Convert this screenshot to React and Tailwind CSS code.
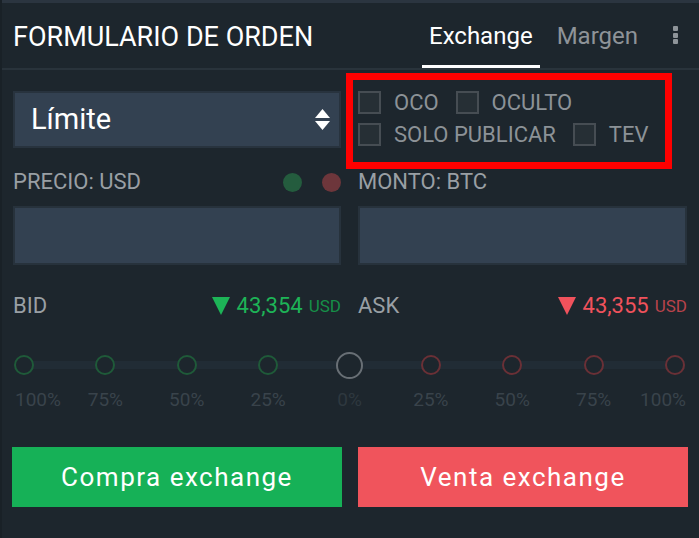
import React from "react";

const stops = [
  { label: "100%", tone: "green", align: "start" },
  { label: "75%", tone: "green" },
  { label: "50%", tone: "green" },
  { label: "25%", tone: "green" },
  { label: "0%", tone: "mid" },
  { label: "25%", tone: "red" },
  { label: "50%", tone: "red" },
  { label: "75%", tone: "red" },
  { label: "100%", tone: "red", align: "end" },
];

function Check({ label }) {
  return (
    <label className="flex items-center gap-[13px]">
      <span className="w-[23px] h-[23px] border-2 border-[#464d53] bg-[#262f35]" />
      <span className="text-[22px] leading-[23px] text-[#8c9297]">{label}</span>
    </label>
  );
}

function Stop({ stop }) {
  const ring =
    stop.tone === "green"
      ? "w-[20px] h-[20px] border-2 border-[#1f5a39]"
      : stop.tone === "red"
      ? "w-[20px] h-[20px] border-2 border-[#6a3036]"
      : "w-[27px] h-[27px] border-2 border-[#686f75]";
  const align =
    stop.align === "start" ? "items-start" : stop.align === "end" ? "items-end" : "items-center";
  return (
    <div className={"flex flex-col w-[20px] " + align}>
      <div className="h-[28px] w-full flex items-center justify-center">
        <span className={"shrink-0 rounded-full bg-[#1d262d] " + ring} />
      </div>
      <span
        className={
          "mt-[10px] whitespace-nowrap text-[19px] leading-[22px] " +
          (stop.tone === "mid" ? "text-[#2e383f]" : "text-[#39434b]") +
          (stop.align === "start" ? " ml-[1px]" : stop.align === "end" ? " mr-[-1px]" : "")
        }
      >
        {stop.label}
      </span>
    </div>
  );
}

export default function App() {
  return (
    <div className="w-[699px] h-[538px] bg-[#1d262d] border-l-2 border-[#192127] font-[Roboto,sans-serif] relative overflow-hidden">
      <div className="h-[3px] bg-[#2b3540]" />

      {/* header */}
      <header className="h-[67px] flex border-b-2 border-[#29333b] pl-[11px] pr-[21px]">
        <h1 className="self-center mt-[2px] text-[27px] leading-[30px] text-white">
          FORMULARIO DE ORDEN
        </h1>
        <nav className="ml-auto flex items-stretch">
          <button className="px-[7px] border-b-[3px] border-white text-[24px] text-white pt-[3px]">
            Exchange
          </button>
          <button className="ml-[10px] px-[7px] border-b-[3px] border-transparent text-[24px] text-[#8e9398] pt-[3px]">
            Margen
          </button>
          <div className="ml-[28px] flex flex-col gap-[1.5px] pt-[23px]">
            <span className="w-[5px] h-[5px] rounded-[1px] bg-[#8e9499]" />
            <span className="w-[5px] h-[5px] rounded-[1px] bg-[#8e9499]" />
            <span className="w-[5px] h-[5px] rounded-[1px] bg-[#8e9499]" />
          </div>
        </nav>
      </header>

      <div className="pl-[11px] pr-[10px]">
        <div className="grid grid-cols-[328px_329px] gap-x-[17px]">
          {/* type select */}
          <div className="mt-[21px] h-[57px] border-2 border-[#28333e] bg-[#334151] flex items-center pl-[16px] pr-[9px]">
            <span className="text-[29px] text-white">Límite</span>
            <svg className="ml-auto" width="15" height="22" viewBox="0 0 15 22">
              <path d="M7.5 0 L15 9 L0 9 Z" fill="#ffffff" />
              <path d="M0 12 L15 12 L7.5 21 Z" fill="#ffffff" />
            </svg>
          </div>

          {/* flags */}
          <div className="mt-[21px] flex flex-col gap-[9px]">
            <div className="flex gap-[17px]">
              <Check label="OCO" />
              <Check label="OCULTO" />
            </div>
            <div className="flex gap-[17px]">
              <Check label="SOLO PUBLICAR" />
              <Check label="TEV" />
            </div>
          </div>

          {/* labels */}
          <div className="mt-[23px] h-[22px] flex items-center">
            <span className="text-[22px] leading-[22px] text-[#999fa4]">PRECIO: USD</span>
            <span className="ml-auto w-[19px] h-[19px] rounded-full bg-[#245c3e]" />
            <span className="ml-[20px] w-[19px] h-[19px] rounded-full bg-[#6d363b]" />
          </div>
          <div className="mt-[23px] h-[22px] flex items-center">
            <span className="text-[22px] leading-[22px] text-[#999fa4]">MONTO: BTC</span>
          </div>

          {/* inputs */}
          <input className="mt-[13px] h-[59px] border-2 border-[#27323c] bg-[#334151] outline-none px-3 text-white" />
          <input className="mt-[13px] h-[59px] border-2 border-[#27323c] bg-[#334151] outline-none px-3 text-white" />

          {/* bid / ask */}
          <div className="mt-[29px] h-[24px] flex items-center">
            <span className="text-[22px] leading-[24px] text-[#999fa4]">BID</span>
            <svg className="ml-auto" width="18" height="18" viewBox="0 0 18 18">
              <path d="M0 0 L18 0 L9 18 Z" fill="#1db457" />
            </svg>
            <span className="ml-[7px] text-[22px] leading-[24px] text-[#1db457]">43,354</span>
            <span className="ml-[6px] text-[17px] leading-[24px] text-[#168f48]">USD</span>
          </div>
          <div className="mt-[29px] h-[24px] flex items-center">
            <span className="text-[22px] leading-[24px] text-[#999fa4]">ASK</span>
            <svg className="ml-auto" width="18" height="18" viewBox="0 0 18 18">
              <path d="M0 0 L18 0 L9 18 Z" fill="#f0525c" />
            </svg>
            <span className="ml-[7px] text-[22px] leading-[24px] text-[#f0525c]">43,355</span>
            <span className="ml-[6px] text-[17px] leading-[24px] text-[#b8434b]">USD</span>
          </div>
        </div>

        {/* slider */}
        <div className="relative mt-[33px] pl-[1px] pr-[4px]">
          <div className="absolute left-[2px] right-[4px] top-[10px] h-[8px] bg-[#212c35]" />
          <div className="relative flex justify-between">
            {stops.map((s, i) => (
              <Stop key={i} stop={s} />
            ))}
          </div>
        </div>

        {/* actions */}
        <div className="mt-[36px] grid grid-cols-[330px_330px] gap-x-[16px] -ml-[1px]">
          <button className="h-[60px] bg-[#16b157] text-white text-[26px] tracking-[1.5px]">
            Compra exchange
          </button>
          <button className="h-[60px] bg-[#f0545c] text-white text-[26px] tracking-[1.5px]">
            Venta exchange
          </button>
        </div>
      </div>

      {/* annotation box */}
      <div className="absolute left-[344px] top-[73px] w-[326px] h-[96px] border-[7px] border-[#ff0000] pointer-events-none" />
    </div>
  );
}
